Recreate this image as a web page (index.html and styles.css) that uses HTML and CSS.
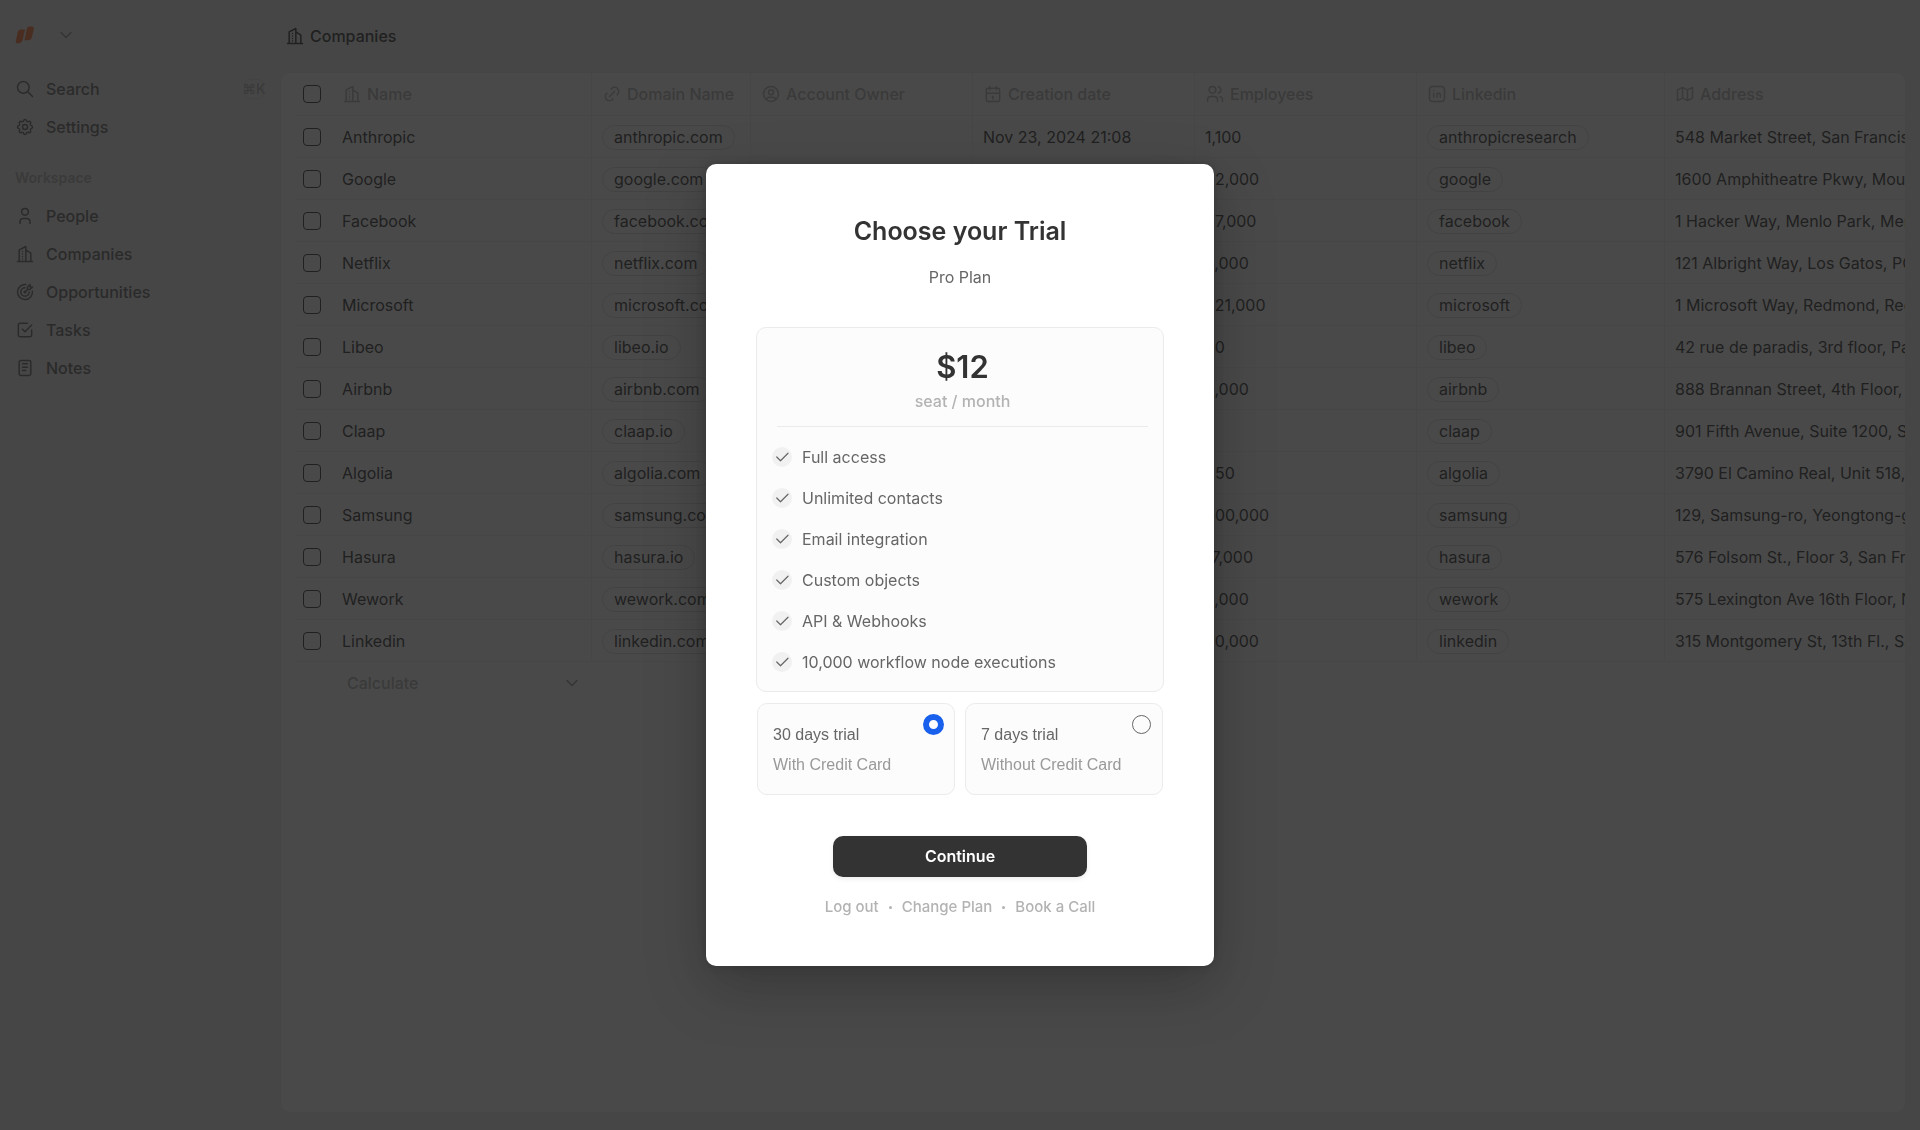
FILE: index.html
```html
<!DOCTYPE html>
<html lang="en">
<head>
<meta charset="utf-8">
<meta name="viewport" content="width=device-width, initial-scale=1">
<title>Companies</title>
<link rel="stylesheet" href="styles.css">
</head>
<body>
<svg class="sprite" aria-hidden="true">
  <symbol id="building" viewBox="0 0 24 24"><path d="M3 21h18M5 21v-14l8 -4v18M19 21v-10l-6 -4M9 9v.01M9 12v.01M9 15v.01M9 18v.01"/></symbol>
  <symbol id="search" viewBox="0 0 24 24"><path d="M3 10a7 7 0 1 0 14 0a7 7 0 1 0 -14 0M21 21l-6 -6"/></symbol>
  <symbol id="settings" viewBox="0 0 24 24"><path d="M10.325 4.317c.426 -1.756 2.924 -1.756 3.35 0a1.724 1.724 0 0 0 2.573 1.066c1.543 -.94 3.31 .826 2.37 2.37a1.724 1.724 0 0 0 1.065 2.572c1.756 .426 1.756 2.924 0 3.35a1.724 1.724 0 0 0 -1.066 2.573c.94 1.543 -.826 3.31 -2.37 2.37a1.724 1.724 0 0 0 -2.572 1.065c-.426 1.756 -2.924 1.756 -3.35 0a1.724 1.724 0 0 0 -2.573 -1.066c-1.543 .94 -3.31 -.826 -2.37 -2.37a1.724 1.724 0 0 0 -1.065 -2.572c-1.756 -.426 -1.756 -2.924 0 -3.35a1.724 1.724 0 0 0 1.066 -2.573c-.94 -1.543 .826 -3.31 2.37 -2.37c1 .608 2.296 .07 2.572 -1.065z"/><path d="M9 12a3 3 0 1 0 6 0a3 3 0 0 0 -6 0"/></symbol>
  <symbol id="user" viewBox="0 0 24 24"><path d="M8 7a4 4 0 1 0 8 0a4 4 0 0 0 -8 0M6 21v-2a4 4 0 0 1 4 -4h4a4 4 0 0 1 4 4v2"/></symbol>
  <symbol id="target" viewBox="0 0 24 24"><path d="M11 12a1 1 0 1 0 2 0a1 1 0 1 0 -2 0M12 7a5 5 0 1 0 5 5M13 3.055a9 9 0 1 0 7.941 7.945M15 6v3h3l3 -3h-3v-3zM15 9l-3 3"/></symbol>
  <symbol id="checkbox" viewBox="0 0 24 24"><path d="M9 11l3 3l8 -8M20 12v6a2 2 0 0 1 -2 2h-12a2 2 0 0 1 -2 -2v-12a2 2 0 0 1 2 -2h9"/></symbol>
  <symbol id="notes" viewBox="0 0 24 24"><path d="M5 5a2 2 0 0 1 2 -2h10a2 2 0 0 1 2 2v14a2 2 0 0 1 -2 2h-10a2 2 0 0 1 -2 -2zM9 7h6M9 11h6M9 15h4"/></symbol>
  <symbol id="link" viewBox="0 0 24 24"><path d="M9 15l6 -6M11 6l.463 -.536a5 5 0 0 1 7.071 7.072l-.534 .464M13 18l-.397 .534a5.068 5.068 0 0 1 -7.127 0a4.972 4.972 0 0 1 0 -7.071l.524 -.463"/></symbol>
  <symbol id="user-circle" viewBox="0 0 24 24"><path d="M3 12a9 9 0 1 0 18 0a9 9 0 1 0 -18 0M9 10a3 3 0 1 0 6 0a3 3 0 1 0 -6 0M6.168 18.849a4 4 0 0 1 3.832 -2.849h4a4 4 0 0 1 3.834 2.855"/></symbol>
  <symbol id="calendar" viewBox="0 0 24 24"><path d="M4 7a2 2 0 0 1 2 -2h12a2 2 0 0 1 2 2v12a2 2 0 0 1 -2 2h-12a2 2 0 0 1 -2 -2zM16 3v4M8 3v4M4 11h16M11 15h1M12 15v3"/></symbol>
  <symbol id="users" viewBox="0 0 24 24"><path d="M5 7a4 4 0 1 0 8 0a4 4 0 1 0 -8 0M3 21v-2a4 4 0 0 1 4 -4h4a4 4 0 0 1 4 4v2M16 3.13a4 4 0 0 1 0 7.75M21 21v-2a4 4 0 0 0 -3 -3.85"/></symbol>
  <symbol id="linkedin" viewBox="0 0 24 24"><path d="M3 7a4 4 0 0 1 4 -4h10a4 4 0 0 1 4 4v10a4 4 0 0 1 -4 4h-10a4 4 0 0 1 -4 -4zM8 11v5M8 8v.01M12 16v-5M16 16v-3a2 2 0 1 0 -4 0"/></symbol>
  <symbol id="map" viewBox="0 0 24 24"><path d="M3 7l6 -3l6 3l6 -3v13l-6 3l-6 -3l-6 3zM9 4v13M15 7v13"/></symbol>
  <symbol id="check" viewBox="0 0 24 24"><path d="M5 12l5 5l10 -10"/></symbol>
  <symbol id="chevron" viewBox="0 0 24 24"><path d="M6 9l6 6l6 -6"/></symbol>
</svg>

<div class="app">
  <aside class="sidebar">
    <button class="workspace" type="button" aria-label="Switch workspace">
      <svg class="logo" viewBox="0 0 20 20" aria-hidden="true"><path d="M5.800 4.400h4.200l-2.200 10.200a4.600 4.600 0 0 1 -4.400 3.700h-.600a2.100 2.100 0 0 1 -2 -2.600l2 -8.900a3.100 3.100 0 0 1 3 -2.400z"/><path d="M14.600 1.400h2.200a2.100 2.100 0 0 1 2 2.600l-2 8.800a3.200 3.200 0 0 1 -3.100 2.500h-4.300l2.300 -10.700a3.100 3.100 0 0 1 2.900 -3.200z"/></svg>
      <svg class="icon chevron"><use href="#chevron"/></svg>
    </button>
    <nav class="nav" aria-label="General">
      <a class="nav-item" href="#search"><svg class="icon"><use href="#search"/></svg>Search<kbd>⌘K</kbd></a>
      <a class="nav-item" href="#settings"><svg class="icon"><use href="#settings"/></svg>Settings</a>
    </nav>
    <h2 class="nav-title">Workspace</h2>
    <nav class="nav" aria-label="Workspace">
      <a class="nav-item" href="#people"><svg class="icon"><use href="#user"/></svg>People</a>
      <a class="nav-item" href="#companies"><svg class="icon"><use href="#building"/></svg>Companies</a>
      <a class="nav-item" href="#opportunities"><svg class="icon"><use href="#target"/></svg>Opportunities</a>
      <a class="nav-item" href="#tasks"><svg class="icon"><use href="#checkbox"/></svg>Tasks</a>
      <a class="nav-item" href="#notes"><svg class="icon"><use href="#notes"/></svg>Notes</a>
    </nav>
  </aside>

  <main class="main">
    <h1 class="page-title"><svg class="icon"><use href="#building"/></svg>Companies</h1>
    <div class="panel">
      <table class="table">
        <colgroup><col class="col-check"><col class="col-name"><col class="col-domain"><col class="col-mid"><col class="col-mid"><col class="col-mid"><col class="col-linkedin"><col></colgroup>
        <thead>
          <tr>
            <th class="check"><input type="checkbox" aria-label="Select all"></th>
            <th><span class="head"><svg class="icon"><use href="#building"/></svg>Name</span></th>
            <th><span class="head"><svg class="icon"><use href="#link"/></svg>Domain Name</span></th>
            <th><span class="head"><svg class="icon"><use href="#user-circle"/></svg>Account Owner</span></th>
            <th><span class="head"><svg class="icon"><use href="#calendar"/></svg>Creation date</span></th>
            <th><span class="head"><svg class="icon"><use href="#users"/></svg>Employees</span></th>
            <th><span class="head"><svg class="icon"><use href="#linkedin"/></svg>Linkedin</span></th>
            <th><span class="head"><svg class="icon"><use href="#map"/></svg>Address</span></th>
          </tr>
        </thead>
        <tbody>
          <tr><td class="check"><input type="checkbox" aria-label="Select Anthropic"></td><td>Anthropic</td><td><a class="chip" href="#anthropic">anthropic.com</a></td><td></td><td>Nov 23, 2024 21:08</td><td>1,100</td><td><a class="chip" href="#in-anthropic">anthropicresearch</a></td><td>548 Market Street, San Francisco, California</td></tr>
          <tr><td class="check"><input type="checkbox" aria-label="Select Google"></td><td>Google</td><td><a class="chip" href="#google">google.com</a></td><td></td><td></td><td>62,000</td><td><a class="chip" href="#in-google">google</a></td><td>1600 Amphitheatre Pkwy, Mountain View, California</td></tr>
          <tr><td class="check"><input type="checkbox" aria-label="Select Facebook"></td><td>Facebook</td><td><a class="chip" href="#facebook">facebook.com</a></td><td></td><td></td><td>67,000</td><td><a class="chip" href="#in-facebook">facebook</a></td><td>1 Hacker Way, Menlo Park, Menlo Park, California</td></tr>
          <tr><td class="check"><input type="checkbox" aria-label="Select Netflix"></td><td>Netflix</td><td><a class="chip" href="#netflix">netflix.com</a></td><td></td><td></td><td>5,000</td><td><a class="chip" href="#in-netflix">netflix</a></td><td>121 Albright Way, Los Gatos, PO Box, California</td></tr>
          <tr><td class="check"><input type="checkbox" aria-label="Select Microsoft"></td><td>Microsoft</td><td><a class="chip" href="#microsoft">microsoft.com</a></td><td></td><td></td><td>221,000</td><td><a class="chip" href="#in-microsoft">microsoft</a></td><td>1 Microsoft Way, Redmond, Redmond, Washington</td></tr>
          <tr><td class="check"><input type="checkbox" aria-label="Select Libeo"></td><td>Libeo</td><td><a class="chip" href="#libeo">libeo.io</a></td><td></td><td></td><td>50</td><td><a class="chip" href="#in-libeo">libeo</a></td><td>42 rue de paradis, 3rd floor, Paris, France</td></tr>
          <tr><td class="check"><input type="checkbox" aria-label="Select Airbnb"></td><td>Airbnb</td><td><a class="chip" href="#airbnb">airbnb.com</a></td><td></td><td></td><td>6,000</td><td><a class="chip" href="#in-airbnb">airbnb</a></td><td>888 Brannan Street, 4th Floor, San Francisco</td></tr>
          <tr><td class="check"><input type="checkbox" aria-label="Select Claap"></td><td>Claap</td><td><a class="chip" href="#claap">claap.io</a></td><td></td><td></td><td></td><td><a class="chip" href="#in-claap">claap</a></td><td>901 Fifth Avenue, Suite 1200, Seattle, Washington</td></tr>
          <tr><td class="check"><input type="checkbox" aria-label="Select Algolia"></td><td>Algolia</td><td><a class="chip" href="#algolia">algolia.com</a></td><td></td><td></td><td>650</td><td><a class="chip" href="#in-algolia">algolia</a></td><td>3790 El Camino Real, Unit 518, Palo Alto</td></tr>
          <tr><td class="check"><input type="checkbox" aria-label="Select Samsung"></td><td>Samsung</td><td><a class="chip" href="#samsung">samsung.com</a></td><td></td><td></td><td>300,000</td><td><a class="chip" href="#in-samsung">samsung</a></td><td>129, Samsung-ro, Yeongtong-gu, Suwon-si</td></tr>
          <tr><td class="check"><input type="checkbox" aria-label="Select Hasura"></td><td>Hasura</td><td><a class="chip" href="#hasura">hasura.io</a></td><td></td><td></td><td>17,000</td><td><a class="chip" href="#in-hasura">hasura</a></td><td>576 Folsom St., Floor 3, San Francisco, California</td></tr>
          <tr><td class="check"><input type="checkbox" aria-label="Select Wework"></td><td>Wework</td><td><a class="chip" href="#wework">wework.com</a></td><td></td><td></td><td>5,000</td><td><a class="chip" href="#in-wework">wework</a></td><td>575 Lexington Ave 16th Floor, New York</td></tr>
          <tr><td class="check"><input type="checkbox" aria-label="Select Linkedin"></td><td>Linkedin</td><td><a class="chip" href="#linkedin-com">linkedin.com</a></td><td></td><td></td><td>20,000</td><td><a class="chip" href="#in-linkedin">linkedin</a></td><td>315 Montgomery St, 13th Fl., San Francisco</td></tr>
        </tbody>
      </table>
      <button class="calculate" type="button">Calculate<svg class="icon"><use href="#chevron"/></svg></button>
    </div>
  </main>
</div>

<div class="overlay">
  <section class="modal" role="dialog" aria-modal="true" aria-labelledby="modal-title">
    <h2 class="modal-title" id="modal-title">Choose your Trial</h2>
    <p class="modal-subtitle">Pro Plan</p>
    <div class="plan">
      <div class="price">
        <strong class="amount">$12</strong>
        <span class="period">seat / month</span>
      </div>
      <ul class="features">
        <li><svg class="tick"><use href="#check"/></svg>Full access</li>
        <li><svg class="tick"><use href="#check"/></svg>Unlimited contacts</li>
        <li><svg class="tick"><use href="#check"/></svg>Email integration</li>
        <li><svg class="tick"><use href="#check"/></svg>Custom objects</li>
        <li><svg class="tick"><use href="#check"/></svg>API &amp; Webhooks</li>
        <li><svg class="tick"><use href="#check"/></svg>10,000 workflow node executions</li>
      </ul>
    </div>
    <div class="trials" role="radiogroup" aria-label="Trial length">
      <label class="trial"><span class="trial-text"><span>30 days trial</span><span class="trial-note">With Credit Card</span></span><input type="radio" name="trial" checked></label>
      <label class="trial"><span class="trial-text"><span>7 days trial</span><span class="trial-note">Without Credit Card</span></span><input type="radio" name="trial"></label>
    </div>
    <button class="continue" type="button">Continue</button>
    <div class="links">
      <a href="#logout">Log out</a><span class="dot"></span><a href="#plan">Change Plan</a><span class="dot"></span><a href="#call">Book a Call</a>
    </div>
  </section>
</div>
</body>
</html>
```

FILE: styles.css
```css
* { box-sizing: border-box; }

body {
  margin: 0;
  background: #f1f1f1;
  color: #333;
  font: 400 16px/24px Inter, "Liberation Sans", sans-serif;
}

h1, h2, p, ul { margin: 0; padding: 0; }
ul { list-style: none; }
a { color: inherit; text-decoration: none; }
button { border: 0; background: none; padding: 0; color: inherit; font: inherit; cursor: pointer; }

.sprite { display: none; }
.icon, .tick {
  flex: none;
  width: 20px;
  height: 20px;
  fill: none;
  stroke: currentColor;
  stroke-width: 1.8;
  stroke-linecap: round;
  stroke-linejoin: round;
}

.app { display: flex; height: 100vh; overflow: hidden; }

/* Sidebar */
.sidebar { flex: none; width: 280px; padding: 16px 16px 16px 15px; color: #666; }
.workspace { display: flex; align-items: center; gap: 21px; height: 38px; margin-bottom: 17px; }
.logo { width: 20px; height: 20px; fill: #ff7436; }
.chevron { color: #999; }
.nav { display: flex; flex-direction: column; gap: 2px; }
.nav-item { display: flex; align-items: center; gap: 11px; height: 36px; font-weight: 500; }
.nav-item kbd {
  display: flex;
  align-items: center;
  justify-content: center;
  width: 20px;
  height: 20px;
  margin-left: auto;
  border: 1px solid #e0e0e0;
  border-radius: 5px;
  color: #b3b3b3;
  font: 500 14px/20px Inter, "DejaVu Sans", sans-serif;
}
.nav-title { margin-top: 13px; color: #b3b3b3; font-size: 14px; line-height: 40px; font-weight: 600; }

/* Main area */
.main { flex: 1; min-width: 0; display: flex; flex-direction: column; padding: 0 14px 17px 0; }
.page-title {
  display: flex;
  flex: none;
  align-items: center;
  gap: 5px;
  height: 72px;
  padding-left: 5px;
  font-size: 16px;
  font-weight: 500;
}
.panel {
  flex: 1;
  min-height: 0;
  overflow: hidden;
  padding-left: 15px;
  border: 1px solid #ebebeb;
  border-radius: 10px;
  background: #fff;
}

.table { width: 100%; table-layout: fixed; border-collapse: separate; border-spacing: 0; }
.col-check { width: 36px; }
.col-name { width: 260px; }
.col-domain { width: 159px; }
.col-mid { width: 222px; }
.col-linkedin { width: 248px; }
.table th, .table td {
  height: 42px;
  padding: 0 0 0 10px;
  border-right: 1px solid #f1f1f1;
  border-bottom: 1px solid #f1f1f1;
  overflow: hidden;
  text-align: left;
  white-space: nowrap;
}
.table th { height: 43px; color: #b3b3b3; font-weight: 500; }
.table .check { padding-left: 7px; border-right: 0; }
.table th:last-child, .table td:last-child { border-right: 0; }
.head { display: flex; align-items: center; gap: 5px; }
.check input {
  appearance: none;
  display: block;
  width: 18px;
  height: 18px;
  margin: 0;
  border: 1px solid #333;
  border-radius: 4px;
}
.chip {
  display: inline-block;
  height: 25px;
  padding: 0 11px;
  border: 1px solid #ddd;
  border-radius: 13px;
  line-height: 23px;
  vertical-align: middle;
}
.calculate {
  display: flex;
  align-items: center;
  justify-content: space-between;
  width: 296px;
  height: 42px;
  padding: 0 10px 0 51px;
  color: #b3b3b3;
  font-weight: 500;
}
.calculate .icon { color: #999; }

/* Trial modal */
.overlay {
  position: fixed;
  inset: 0;
  display: flex;
  align-items: center;
  justify-content: center;
  background: rgba(27, 27, 27, 0.8);
}
.modal {
  width: 508px;
  padding: 51px 50px 49px;
  border-radius: 10px;
  background: #fff;
  box-shadow: 0 20px 60px rgba(0, 0, 0, 0.25), 0 0 10px rgba(0, 0, 0, 0.2);
}
.modal-title { font-size: 25px; line-height: 32px; font-weight: 600; text-align: center; }
.modal-subtitle { margin: 18px 0 38px; color: #666; text-align: center; }
.plan { padding: 19px 15px; border: 1px solid #ebebeb; border-radius: 10px; background: #fcfcfc; }
.price {
  display: flex;
  flex-direction: column;
  align-items: center;
  gap: 2px;
  margin-left: 5px;
  padding-bottom: 13px;
  border-bottom: 1px solid #ebebeb;
}
.amount { font-size: 31px; line-height: 40px; font-weight: 600; }
.period { color: #b3b3b3; font-weight: 500; }
.features { display: flex; flex-direction: column; gap: 21px; margin-top: 20px; color: #666; }
.features li { display: flex; align-items: center; gap: 10px; height: 20px; }
.tick { padding: 1px; border-radius: 50%; background: #f1f1f1; stroke-width: 1.6; }

.trials { display: flex; gap: 10px; margin-top: 11px; padding: 0 1px; }
.trial {
  display: flex;
  flex: 1;
  align-items: flex-start;
  justify-content: space-between;
  height: 92px;
  padding: 10px 10px 0 15px;
  border: 1px solid #ebebeb;
  border-radius: 10px;
  background: #fcfcfc;
  color: #666;
  font-family: "Liberation Sans", Arial, sans-serif;
  white-space: nowrap;
}
.trial-text { display: flex; flex-direction: column; gap: 6px; padding-top: 9px; }
.trial-note { color: #999; }
.trial input {
  appearance: none;
  flex: none;
  width: 19px;
  height: 19px;
  margin: 1px;
  border: 1px solid #666;
  border-radius: 50%;
}
.trial input:checked { width: 21px; height: 21px; margin: 0; border: 6px solid #1961ed; background: #fff; }

.continue {
  display: block;
  width: 254px;
  height: 41px;
  margin: 41px auto 20px;
  padding-bottom: 2px;
  border-radius: 10px;
  background: #333;
  color: #fff;
  font-weight: 600;
  box-shadow: 0 2px 5px rgba(0, 0, 0, 0.08);
}
.links {
  display: flex;
  align-items: center;
  justify-content: center;
  gap: 10px;
  color: #b3b3b3;
  font-size: 15px;
  line-height: 20px;
  font-weight: 500;
}
.dot { width: 3px; height: 3px; border-radius: 50%; background: #b3b3b3; }
```
